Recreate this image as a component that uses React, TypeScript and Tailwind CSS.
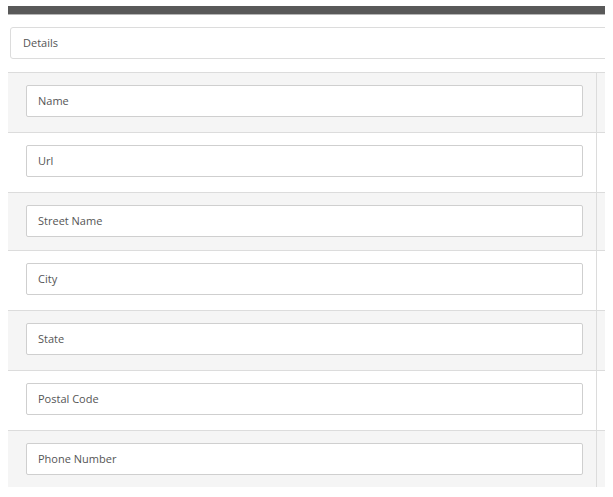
const fields = [
  { label: "Name", h: "h-[60px]" },
  { label: "Url", h: "h-[60px]" },
  { label: "Street Name", h: "h-[58px]" },
  { label: "City", h: "h-[60px]" },
  { label: "State", h: "h-[60px]" },
  { label: "Postal Code", h: "h-[60px]" },
  { label: "Phone Number", h: "h-[57px]" },
];

export default function App() {
  return (
    <div className="w-[613px] h-[497px] bg-white overflow-hidden font-['Open_Sans',sans-serif] text-[11px] text-[#555]">
      <div className="pt-[6px] pl-[8px]">
        <div className="w-[597px] h-[8px] bg-[#595959]" />
        <div className="w-[597px] h-[1px] bg-[#b5b5b5]" />
      </div>
      <div className="mt-[12px] pl-[10px] w-[605px] overflow-hidden">
        <div className="w-[620px] h-[32px] border border-[#dcdcdc] rounded-[3px] px-[12px] leading-[30px]">
          Details
        </div>
      </div>
      <div className="mt-[13px] ml-[8px] w-[597px]">
        {fields.map((f, i) => (
          <div
            key={f.label}
            className={`flex border-t border-[#dcdcdc] ${i % 2 === 0 ? "bg-[#f5f5f5]" : "bg-white"} ${f.h}`}
          >
            <div className="w-[589px] border-r border-[#dcdcdc] pt-[12px] pl-[18px]">
              <div className="w-[557px] h-[32px] bg-white border border-[#cfcfcf] rounded-[2px] px-[11px] leading-[30px]">
                {f.label}
              </div>
            </div>
            <div className="flex-1" />
          </div>
        ))}
      </div>
    </div>
  );
}
